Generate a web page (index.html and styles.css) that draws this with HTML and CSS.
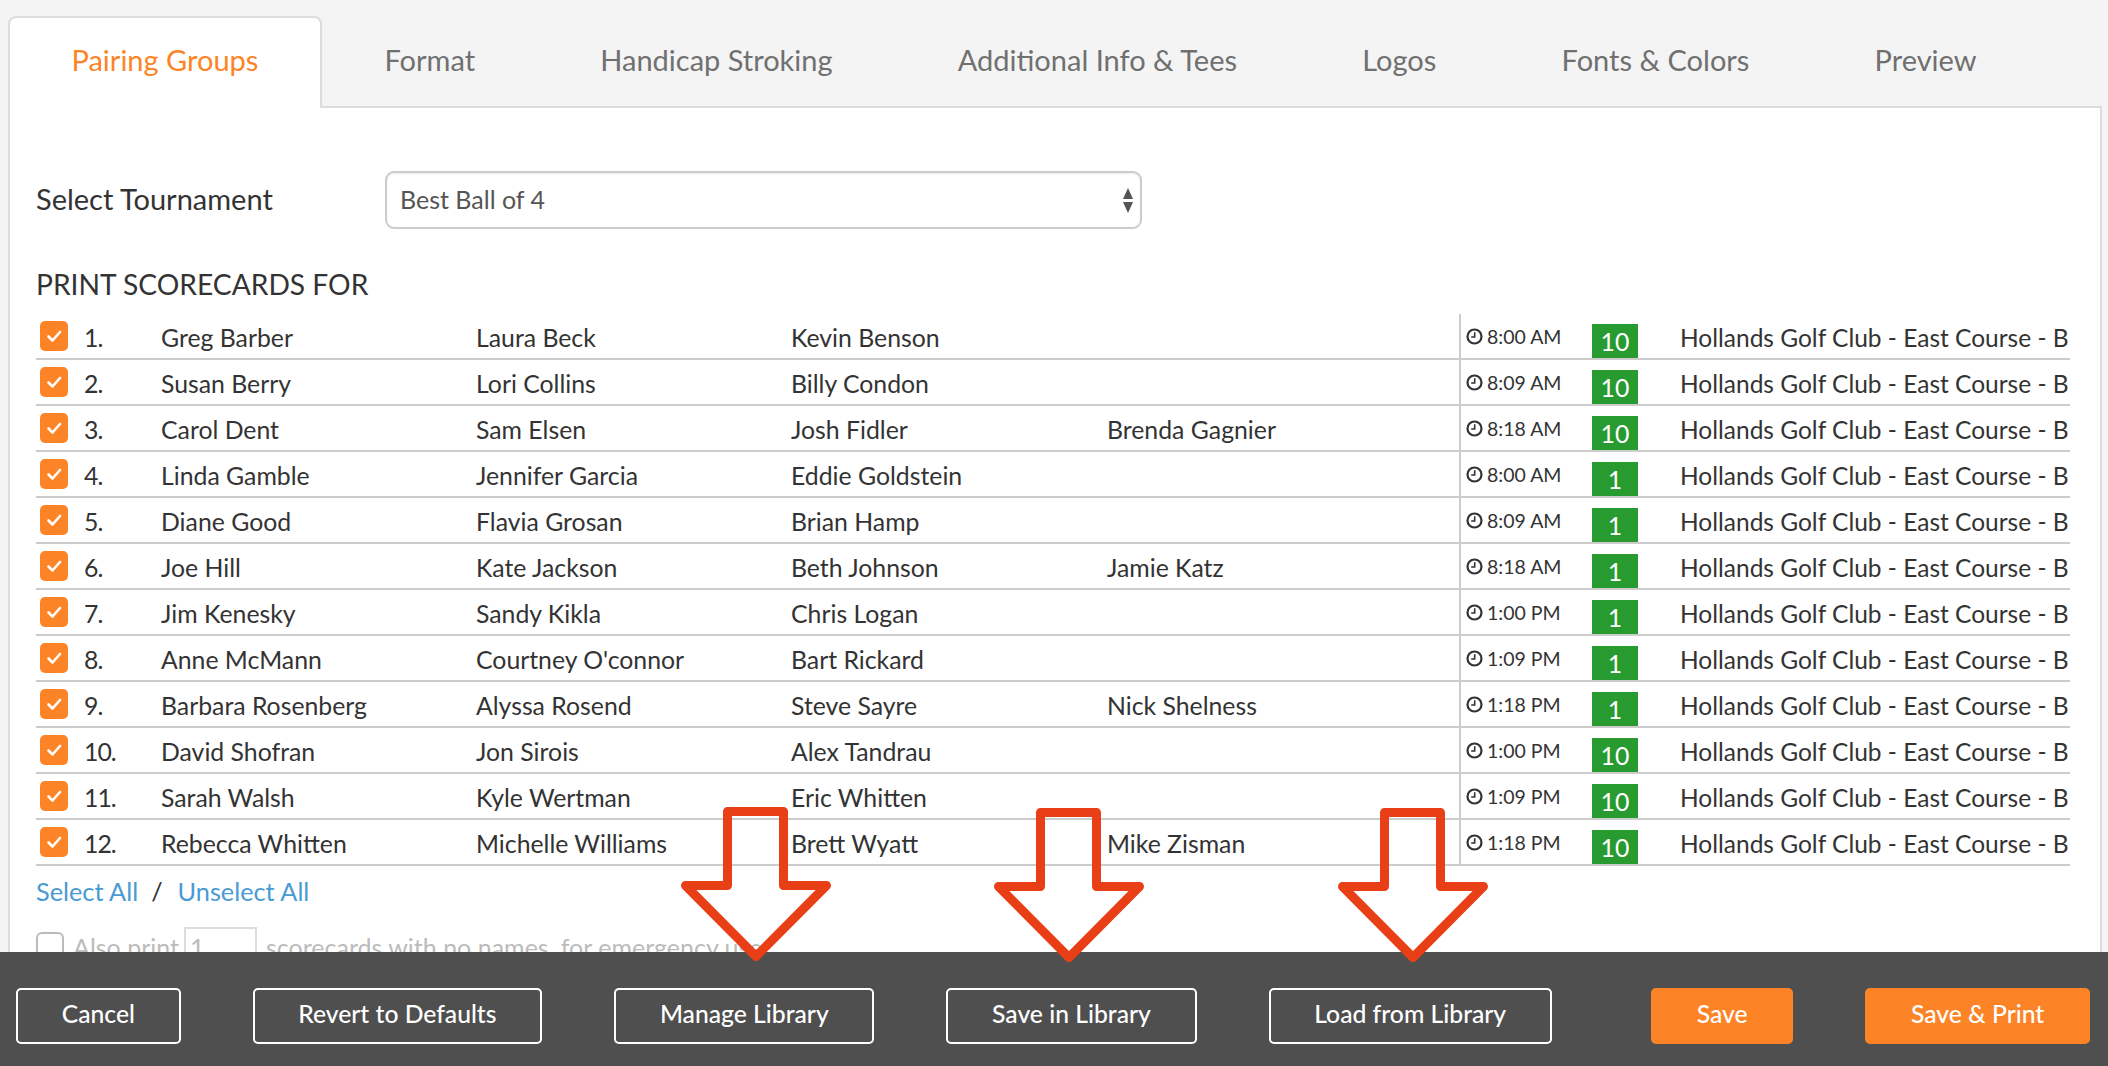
FILE: index.html
```html
<!DOCTYPE html>
<html lang="en">
<head>
<meta charset="utf-8">
<title>Print Scorecards</title>
<link rel="stylesheet" href="styles.css">
</head>
<body>
<svg class="defs" width="0" height="0" aria-hidden="true">
  <symbol id="clock" viewBox="0 0 17 17"><circle cx="8.5" cy="8.5" r="7" fill="none" stroke="#333" stroke-width="2.2"/><path d="M8.7 4.2V9H5.2" fill="none" stroke="#333" stroke-width="1.6"/></symbol>
  <symbol id="check" viewBox="0 0 28 30"><path d="M8.5 15.5l4 4 7.5-8.5" fill="none" stroke="#fff" stroke-width="2.6" stroke-linecap="round" stroke-linejoin="round"/></symbol>
  <symbol id="arrow" viewBox="0 0 160 165"><path d="M51.5 9.5H107.5V83.5H150.5L80 154.5L9.5 83.5H51.5Z" fill="none" stroke="#e93f17" stroke-width="9" stroke-linejoin="round"/></symbol>
</svg>
<div class="app">
  <nav class="tabs">
    <a class="tab active">Pairing Groups</a>
    <a class="tab">Format</a>
    <a class="tab">Handicap Stroking</a>
    <a class="tab">Additional Info &amp; Tees</a>
    <a class="tab">Logos</a>
    <a class="tab">Fonts &amp; Colors</a>
    <a class="tab">Preview</a>
  </nav>
  <main class="panel">
    <div class="select-row">
      <label class="select-label">Select Tournament</label>
      <div class="select"><span class="select-value">Best Ball of 4</span><span class="spin"><i class="up"></i><i class="down"></i></span></div>
    </div>
    <h2 class="heading">PRINT SCORECARDS FOR</h2>
    <div class="table">
      <div class="row"><span class="cb"><svg><use href="#check"/></svg></span><span class="num">1.</span><span class="cell">Greg Barber</span><span class="cell">Laura Beck</span><span class="cell">Kevin Benson</span><span class="cell"></span><span class="time"><svg><use href="#clock"/></svg>8:00 AM</span><span class="badge">10</span><span class="course">Hollands Golf Club - East Course - B</span></div>
      <div class="row"><span class="cb"><svg><use href="#check"/></svg></span><span class="num">2.</span><span class="cell">Susan Berry</span><span class="cell">Lori Collins</span><span class="cell">Billy Condon</span><span class="cell"></span><span class="time"><svg><use href="#clock"/></svg>8:09 AM</span><span class="badge">10</span><span class="course">Hollands Golf Club - East Course - B</span></div>
      <div class="row"><span class="cb"><svg><use href="#check"/></svg></span><span class="num">3.</span><span class="cell">Carol Dent</span><span class="cell">Sam Elsen</span><span class="cell">Josh Fidler</span><span class="cell">Brenda Gagnier</span><span class="time"><svg><use href="#clock"/></svg>8:18 AM</span><span class="badge">10</span><span class="course">Hollands Golf Club - East Course - B</span></div>
      <div class="row"><span class="cb"><svg><use href="#check"/></svg></span><span class="num">4.</span><span class="cell">Linda Gamble</span><span class="cell">Jennifer Garcia</span><span class="cell">Eddie Goldstein</span><span class="cell"></span><span class="time"><svg><use href="#clock"/></svg>8:00 AM</span><span class="badge">1</span><span class="course">Hollands Golf Club - East Course - B</span></div>
      <div class="row"><span class="cb"><svg><use href="#check"/></svg></span><span class="num">5.</span><span class="cell">Diane Good</span><span class="cell">Flavia Grosan</span><span class="cell">Brian Hamp</span><span class="cell"></span><span class="time"><svg><use href="#clock"/></svg>8:09 AM</span><span class="badge">1</span><span class="course">Hollands Golf Club - East Course - B</span></div>
      <div class="row"><span class="cb"><svg><use href="#check"/></svg></span><span class="num">6.</span><span class="cell">Joe Hill</span><span class="cell">Kate Jackson</span><span class="cell">Beth Johnson</span><span class="cell">Jamie Katz</span><span class="time"><svg><use href="#clock"/></svg>8:18 AM</span><span class="badge">1</span><span class="course">Hollands Golf Club - East Course - B</span></div>
      <div class="row"><span class="cb"><svg><use href="#check"/></svg></span><span class="num">7.</span><span class="cell">Jim Kenesky</span><span class="cell">Sandy Kikla</span><span class="cell">Chris Logan</span><span class="cell"></span><span class="time"><svg><use href="#clock"/></svg>1:00 PM</span><span class="badge">1</span><span class="course">Hollands Golf Club - East Course - B</span></div>
      <div class="row"><span class="cb"><svg><use href="#check"/></svg></span><span class="num">8.</span><span class="cell">Anne McMann</span><span class="cell">Courtney O'connor</span><span class="cell">Bart Rickard</span><span class="cell"></span><span class="time"><svg><use href="#clock"/></svg>1:09 PM</span><span class="badge">1</span><span class="course">Hollands Golf Club - East Course - B</span></div>
      <div class="row"><span class="cb"><svg><use href="#check"/></svg></span><span class="num">9.</span><span class="cell">Barbara Rosenberg</span><span class="cell">Alyssa Rosend</span><span class="cell">Steve Sayre</span><span class="cell">Nick Shelness</span><span class="time"><svg><use href="#clock"/></svg>1:18 PM</span><span class="badge">1</span><span class="course">Hollands Golf Club - East Course - B</span></div>
      <div class="row"><span class="cb"><svg><use href="#check"/></svg></span><span class="num">10.</span><span class="cell">David Shofran</span><span class="cell">Jon Sirois</span><span class="cell">Alex Tandrau</span><span class="cell"></span><span class="time"><svg><use href="#clock"/></svg>1:00 PM</span><span class="badge">10</span><span class="course">Hollands Golf Club - East Course - B</span></div>
      <div class="row"><span class="cb"><svg><use href="#check"/></svg></span><span class="num">11.</span><span class="cell">Sarah Walsh</span><span class="cell">Kyle Wertman</span><span class="cell">Eric Whitten</span><span class="cell"></span><span class="time"><svg><use href="#clock"/></svg>1:09 PM</span><span class="badge">10</span><span class="course">Hollands Golf Club - East Course - B</span></div>
      <div class="row"><span class="cb"><svg><use href="#check"/></svg></span><span class="num">12.</span><span class="cell">Rebecca Whitten</span><span class="cell">Michelle Williams</span><span class="cell">Brett Wyatt</span><span class="cell">Mike Zisman</span><span class="time"><svg><use href="#clock"/></svg>1:18 PM</span><span class="badge">10</span><span class="course">Hollands Golf Club - East Course - B</span></div>
    </div>
    <div class="select-links"><a>Select All</a><span class="slash">/</span><a>Unselect All</a></div>
    <div class="also"><span class="cb-empty"></span><span>Also print</span><span class="num-input">1</span><span>scorecards with no names, for emergency use</span></div>
  </main>
  <footer class="bar">
    <button class="btn">Cancel</button>
    <button class="btn">Revert to Defaults</button>
    <button class="btn">Manage Library</button>
    <button class="btn">Save in Library</button>
    <button class="btn">Load from Library</button>
    <button class="btn solid save">Save</button>
    <button class="btn solid">Save &amp; Print</button>
  </footer>
  <svg class="arrow a1"><use href="#arrow"/></svg>
  <svg class="arrow a2"><use href="#arrow"/></svg>
  <svg class="arrow a3"><use href="#arrow"/></svg>
</div>
</body>
</html>
```
FILE: styles.css
```css
* { box-sizing: border-box; }
html, body { margin: 0; padding: 0; }
body { background: #f4f4f4; font-family: "Lato", "Liberation Sans", sans-serif; color: #333; }
.defs { position: absolute; }
.app { position: relative; width: 2108px; height: 1066px; overflow: hidden; padding: 16px 6px 0 8px; }

.tabs { display: flex; height: 92px; align-items: stretch; margin-bottom: -2px; position: relative; z-index: 1; }
.tab { padding: 25px 62.6px 0; font-size: 29px; line-height: 38px; color: #707070; white-space: nowrap; }
.tab.active { color: #fd8426; background: #fff; border: 2px solid #dcdcdc; border-bottom: 0; border-radius: 8px 8px 0 0; padding: 23px 61.5px 0; }

.panel { background: #fff; height: 1000px; border: 2px solid #dcdcdc; border-bottom: 0; padding: 63px 30px 0 26px; }

.select-row { display: flex; align-items: center; height: 58px; }
.select-label { width: 349px; font-size: 29px; color: #333; margin-bottom: 4px; }
.select { width: 757px; height: 58px; border: 2px solid #ccc; border-radius: 9px; display: flex; align-items: center; justify-content: space-between; padding: 0 5px 0 13px; font-size: 25px; color: #555; box-shadow: inset 0 1px 2px rgba(0,0,0,.08); }
.select-value { margin-bottom: 3px; }
.spin { display: flex; flex-direction: column; gap: 3px; width: 14px; align-items: center; }
.spin i { display: block; width: 0; height: 0; border-left: 5.5px solid transparent; border-right: 5.5px solid transparent; }
.spin .up { border-bottom: 11px solid #555; }
.spin .down { border-top: 11px solid #555; }

.heading { margin: 37px 0 0; font-size: 28.2px; line-height: 36px; font-weight: 400; color: #333; }

.table { margin-top: 12px; }
.row { display: grid; grid-template-columns: 48px 77px 315px 315px 316px 352px 133px 46px 42px 1fr; height: 46px; border-bottom: 2px solid #ccc; font-size: 24.8px; color: #333; align-items: center; white-space: nowrap; }
.row .cb { margin-left: 4px; width: 28px; height: 30px; background: #fd8426; border-radius: 5px; display: block; }
.cb svg { width: 28px; height: 30px; display: block; }
.cell, .num, .course { padding-top: 2px; }
.num { letter-spacing: -1px; }
.time { grid-column: 7; align-self: stretch; border-left: 2px solid #ccc; display: flex; align-items: center; gap: 4px; padding-left: 5px; font-size: 19.5px; padding-bottom: 0; }
.time svg { width: 17px; height: 17px; }
.badge { grid-column: 8; align-self: end; height: 34px; background: #289b30; color: #fff; text-align: center; line-height: 36px; }
.course { grid-column: 10; font-size: 24.5px; }

.select-links { margin-top: 9px; font-size: 25.3px; line-height: 32px; color: #4a9ad4; display: flex; }
.slash { color: #333; margin: 0 15px 0 13px; }

.also { display: flex; align-items: center; margin-top: 20px; font-size: 25px; color: #bbb; height: 40px; }
.cb-empty { width: 28px; height: 30px; border: 2px solid #bbb; border-radius: 6px; margin-right: 9px; }
.num-input { width: 73px; height: 40px; border: 2px solid #ddd; margin: 0 9px 0 5px; padding: 0 4px; line-height: 36px; }

.bar { position: absolute; left: 0; right: 0; bottom: 0; height: 114px; background: #4f4f4f; display: flex; align-items: center; gap: 72px; padding: 13px 18px 0 16px; z-index: 2; }
.btn { height: 56px; padding: 0 43.7px 4px; background: transparent; border: 2px solid #fff; border-radius: 5px; color: #fff; font: 500 24.7px "Lato", "Liberation Sans", sans-serif; white-space: nowrap; }
.btn.solid { background: #fd8426; border-color: #fd8426; }
.btn.save { margin-left: auto; }

.arrow { position: absolute; top: 802px; width: 160px; height: 165px; z-index: 3; }
.a1 { left: 676px; }
.a2 { left: 989px; top: 803px; }
.a3 { left: 1333px; top: 803px; }
```
